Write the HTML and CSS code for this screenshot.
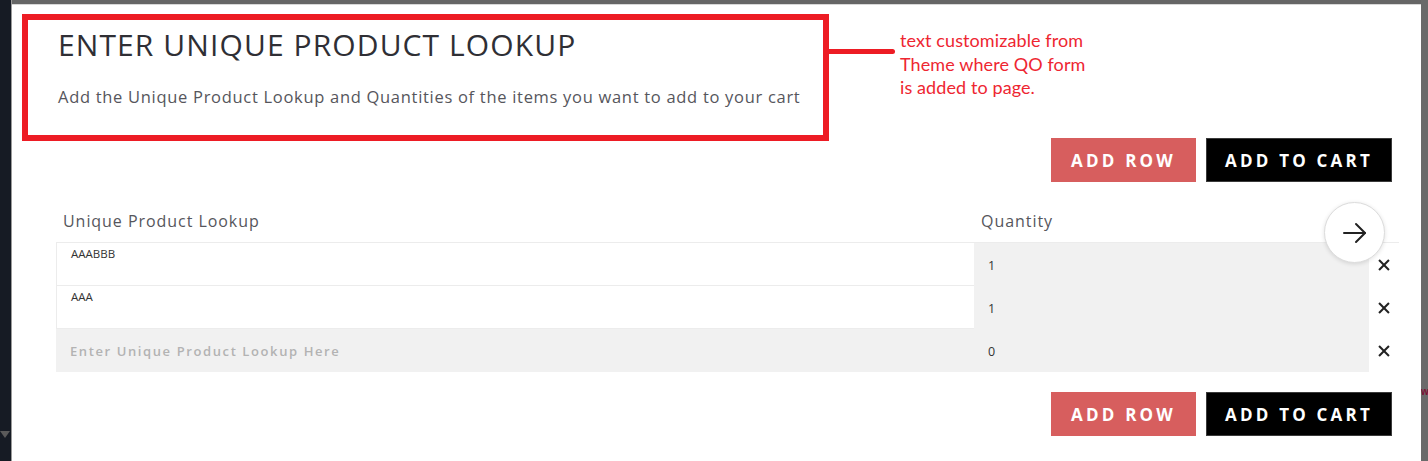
FILE: index.html
```html
<!DOCTYPE html>
<html lang="en">
<head>
<meta charset="utf-8">
<title>Quick Order</title>
<link rel="stylesheet" href="styles.css">
</head>
<body>
<div class="frame">
  <div class="side-left"><span class="tri"></span></div>
  <div class="main">
    <div class="topbar"></div>
    <div class="modal">
      <div class="intro">
        <h1 class="title">ENTER UNIQUE PRODUCT LOOKUP</h1>
        <p class="lead">Add the Unique Product Lookup and Quantities of the items you want to add to your cart</p>
      </div>
      <div class="actions">
        <button class="btn btn-row">ADD ROW</button>
        <button class="btn btn-cart">ADD TO CART</button>
      </div>
      <div class="table">
        <div class="thead">
          <div class="th th-sku">Unique Product Lookup</div>
          <div class="th th-qty">Quantity</div>
          <div class="th"></div>
        </div>
        <div class="tbody">
          <div class="row">
            <div class="cell sku filled">AAABBB</div>
            <div class="cell qty">1</div>
            <div class="cell del"><span class="x"></span></div>
          </div>
          <div class="row">
            <div class="cell sku filled">AAA</div>
            <div class="cell qty">1</div>
            <div class="cell del"><span class="x"></span></div>
          </div>
          <div class="row">
            <div class="cell sku empty">Enter Unique Product Lookup Here</div>
            <div class="cell qty">0</div>
            <div class="cell del"><span class="x"></span></div>
          </div>
        </div>
      </div>
      <div class="actions actions-bottom">
        <button class="btn btn-row">ADD ROW</button>
        <button class="btn btn-cart">ADD TO CART</button>
      </div>

      <button class="next" aria-label="Next">
        <svg width="26" height="22" viewBox="0 0 26 22" fill="none" stroke="#222" stroke-width="2" stroke-linecap="round" stroke-linejoin="round"><path d="M2 11H23"/><path d="M14 2L23 11L14 20"/></svg>
      </button>

      <div class="annot">
        <div class="annot-box"></div>
        <div class="annot-line"></div>
        <div class="annot-note">text customizable from<br>Theme where QO form<br>is added to page.</div>
      </div>
    </div>
  </div>
  <div class="side-right"><span class="peek">w</span></div>
</div>
</body>
</html>
```

FILE: styles.css
```css
* { box-sizing: border-box; }
html, body { margin: 0; padding: 0; }
body {
  width: 1428px;
  height: 461px;
  overflow: hidden;
  background: #fff;
  font-family: "Open Sans", "Noto Sans", sans-serif;
}
.frame {
  display: flex;
  height: 461px;
}
.side-left {
  width: 12px;
  flex: none;
  background: #161b24;
  border-right: 1px solid #9a9a9a;
  position: relative;
}
.tri {
  position: absolute;
  left: 0;
  top: 431px;
  width: 0;
  height: 0;
  border-left: 5px solid transparent;
  border-right: 5px solid transparent;
  border-top: 7px solid #5a5a5a;
}
.main {
  flex: 1;
  display: flex;
  flex-direction: column;
  min-width: 0;
}
.topbar {
  height: 5px;
  flex: none;
  background: #666;
  border-bottom: 1px solid #d8d8d8;
}
.modal {
  flex: 1;
  position: relative;
  padding: 22px 22px 0 44px;
}
.intro {
  padding-left: 2px;
}
.title {
  margin: 0;
  font-weight: 400;
  font-size: 30px;
  line-height: 36px;
  letter-spacing: 1.1px;
  color: #2f2f35;
}
.lead {
  margin: 22px 0 0;
  font-size: 16.5px;
  line-height: 24px;
  letter-spacing: 0.7px;
  color: #56565c;
}
.actions {
  display: flex;
  justify-content: flex-end;
  gap: 10px;
  margin: 29px 7px 0 0;
}
.actions-bottom {
  margin-top: 20px;
}
.btn {
  height: 44px;
  border: 0;
  padding: 0;
  font-family: "Open Sans", sans-serif;
  font-weight: 700;
  font-size: 17px;
  letter-spacing: 3.2px;
  color: #fff;
  display: flex;
  align-items: center;
  justify-content: center;
}
.btn-row {
  width: 145px;
  background: #d75e5e;
}
.btn-cart {
  width: 186px;
  background: #000;
  border: 1px solid #3a3a3a;
}
.table {
  margin-top: 18px;
  width: 1343px;
}
.thead {
  display: grid;
  grid-template-columns: 918px 395px 30px;
  height: 42px;
  align-items: center;
}
.th {
  font-size: 16px;
  letter-spacing: 0.95px;
  color: #56565c;
  padding-left: 7px;
}
.tbody {
  border-top: 1px solid #ececec;
}
.row {
  display: grid;
  grid-template-columns: 918px 395px 30px;
  height: 43px;
}
.cell {
  font-size: 13px;
  color: #333;
}
.sku.filled {
  background: #fff;
  border-left: 1px solid #ececec;
  border-bottom: 1px solid #ececec;
  padding: 4px 0 0 14px;
  font-size: 11.5px;
  line-height: 14px;
  color: #333;
}
.sku.empty {
  background: #f1f1f1;
  padding-left: 14px;
  display: flex;
  align-items: center;
  font-size: 13px;
  letter-spacing: 1.6px;
  color: #b3b3b3;
  font-weight: 600;
}
.qty {
  background: #f1f1f1;
  display: flex;
  align-items: center;
  padding: 1px 0 0 14px;
  font-size: 12.5px;
}
.del {
  display: flex;
  align-items: center;
  justify-content: center;
}
.x {
  position: relative;
  width: 12px;
  height: 12px;
}
.x::before, .x::after {
  content: "";
  position: absolute;
  left: -1px;
  top: 5px;
  width: 14px;
  height: 2px;
  background: #222;
  transform: rotate(45deg);
}
.x::after { transform: rotate(-45deg); }
.next {
  position: absolute;
  left: 1312px;
  top: 197px;
  width: 61px;
  height: 61px;
  border-radius: 50%;
  background: #fff;
  border: 1px solid #dcdcdc;
  box-shadow: 0 1px 4px rgba(0,0,0,0.12);
  display: flex;
  align-items: center;
  justify-content: center;
  padding: 0;
}
.annot-box {
  position: absolute;
  left: 10px;
  top: 9px;
  width: 807px;
  height: 127px;
  border: 6px solid #ed1c24;
}
.annot-line {
  position: absolute;
  left: 815px;
  top: 44px;
  width: 68px;
  height: 5px;
  background: #ed1c24;
  border-radius: 0 3px 3px 0;
}
.annot-note {
  position: absolute;
  left: 888px;
  top: 24px;
  font-family: "Lato", sans-serif;
  font-size: 18px;
  line-height: 23.5px;
  letter-spacing: 0.1px;
  color: #ee2631;
  white-space: nowrap;
}
.side-right {
  width: 7px;
  flex: none;
  background: #6a6a6a;
  overflow: hidden;
  position: relative;
}
.peek {
  position: absolute;
  left: 0;
  top: 386px;
  font-family: "Liberation Sans", sans-serif;
  font-size: 10px;
  font-weight: 700;
  line-height: 12px;
  color: #7d1133;
}
```
